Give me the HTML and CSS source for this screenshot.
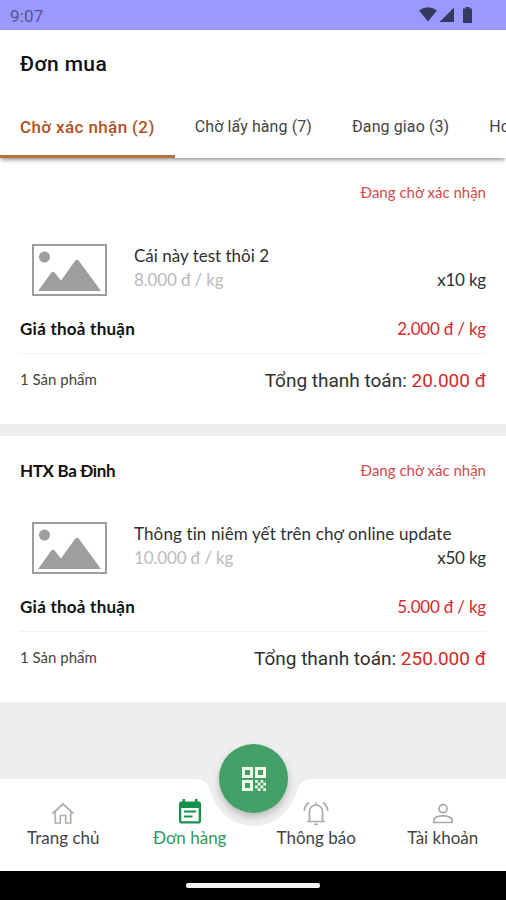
FILE: index.html
```html
<!DOCTYPE html>
<html lang="vi">
<head>
    <meta charset="UTF-8">
    <meta name="viewport" content="width=device-width, initial-scale=1.0">
    <title>Đơn mua</title>
    <link rel="stylesheet" href="styles.css">
</head>
<body>
    <div class="status-bar">
        <span class="clock">9:07</span>
        <svg class="status-icons" width="56" height="18" viewBox="0 0 56 18">
            <path d="M0 4.5Q9 -2 18 4.5L9 15.5Z"/>
            <path d="M20.5 16H35V1.5Z"/>
            <path d="M44 2.5h2.5V1h4v1.500H53V17h-9Z"/>
        </svg>
    </div>

    <header class="header">
        <h1>Đơn mua</h1>
        <nav class="tabs">
            <a class="tab active">Chờ xác nhận (2)</a>
            <a class="tab">Chờ lấy hàng (7)</a>
            <a class="tab">Đang giao (3)</a>
            <a class="tab">Hoàn thành</a>
        </nav>
    </header>

    <main class="orders">
        <section class="order">
            <div class="order-head">
                <span class="shop"></span>
                <span class="state">Đang chờ xác nhận</span>
            </div>
            <div class="product">
                <svg class="thumb" width="75" height="52" viewBox="0 0 75 52">
                    <rect x="1" y="1" width="73" height="50" fill="#fff" stroke="#9e9e9e" stroke-width="2"/>
                    <circle cx="12.500" cy="13" r="5.500"/>
                    <path d="M6 47L19 29Q21 26.500 23 29L29 36.500L43 17Q45 14.500 47 17L69 47Z"/>
                </svg>
                <div class="info">
                    <div class="name">Cái này test thôi 2</div>
                    <div class="line"><span class="old-price">8.000 đ / kg</span><span class="qty">x10 kg</span></div>
                </div>
            </div>
            <div class="deal">
                <span class="deal-label">Giá thoả thuận</span>
                <span class="deal-price">2.000 đ / kg</span>
            </div>
            <div class="total">
                <span class="count">1 Sản phẩm</span>
                <span class="sum">Tổng thanh toán: <span class="amount">20.000 đ</span></span>
            </div>
        </section>

        <section class="order">
            <div class="order-head">
                <span class="shop">HTX Ba Đình</span>
                <span class="state">Đang chờ xác nhận</span>
            </div>
            <div class="product">
                <svg class="thumb" width="75" height="52" viewBox="0 0 75 52">
                    <rect x="1" y="1" width="73" height="50" fill="#fff" stroke="#9e9e9e" stroke-width="2"/>
                    <circle cx="12.500" cy="13" r="5.500"/>
                    <path d="M6 47L19 29Q21 26.500 23 29L29 36.500L43 17Q45 14.500 47 17L69 47Z"/>
                </svg>
                <div class="info">
                    <div class="name long">Thông tin niêm yết trên chợ online update</div>
                    <div class="line"><span class="old-price">10.000 đ / kg</span><span class="qty">x50 kg</span></div>
                </div>
            </div>
            <div class="deal">
                <span class="deal-label">Giá thoả thuận</span>
                <span class="deal-price">5.000 đ / kg</span>
            </div>
            <div class="total">
                <span class="count">1 Sản phẩm</span>
                <span class="sum">Tổng thanh toán: <span class="amount">250.000 đ</span></span>
            </div>
        </section>
    </main>

    <footer class="bottom-nav">
        <!-- bar with the notch for the round button -->
        <svg class="nav-shape" width="506" height="92" viewBox="0 0 506 92">
            <path d="M0 0H196Q206 0 209 9C215 32 232 47 253.500 47S292 32 298 9Q301 0 311 0H506V92H0Z" fill="#fff"/>
        </svg>
        <a class="nav-item">
            <svg width="24" height="24" viewBox="0 0 24 24" fill="none" stroke="#b0b0aa" stroke-width="1.700">
                <path d="M1.500 12.500L12 3L22.500 12.500M4.300 10.500V22H9.300V14.500H14.700V22H19.700V10.500"/>
            </svg>
            <span>Trang chủ</span>
        </a>
        <a class="nav-item active">
            <svg width="24" height="26" viewBox="0 0 24 26">
                <path fill="#14924a" fill-rule="evenodd" d="M4.500 0h2.500v2.500h10V0h2.500v2.500h1.300a2.200 2.200 0 0 1 2.200 2.200v17.600a2.200 2.200 0 0 1-2.200 2.200H3.200A2.200 2.200 0 0 1 1 22.300V4.700A2.200 2.200 0 0 1 3.200 2.500h1.300zM3.300 9v13.200h17.400V9zM6 11.500h12v2H6zM6 16.500h8.500v2H6z"/>
            </svg>
            <span>Đơn hàng</span>
        </a>
        <a class="nav-item">
            <svg width="26" height="24" viewBox="0 0 26 24" fill="none" stroke="#a9ada6" stroke-width="1.700">
                <path d="M4 20.500H22M6.500 20.500V10.500C6.500 6.500 9.500 4 13 4S19.500 6.500 19.500 10.500V20.500M13 4V1.500M11 23.300H15M1.200 10Q1.800 4.500 6 1.500M24.800 10Q24.200 4.500 20 1.500"/>
            </svg>
            <span>Thông báo</span>
        </a>
        <a class="nav-item">
            <svg width="22" height="24" viewBox="0 0 22 24" fill="none" stroke="#a9ada6" stroke-width="1.700">
                <circle cx="11" cy="7.700" r="4"/>
                <path d="M1.800 21.500V19.500C1.800 16 7 14.800 11 14.800S20.200 16 20.200 19.500V21.500Z"/>
            </svg>
            <span>Tài khoản</span>
        </a>
        <button class="scan">
            <svg width="24" height="24" viewBox="0 0 24 24" fill="#f2fbea">
                <path fill-rule="evenodd" d="M0 0h11v11H0zM3 3v5h5V3zM13 0h11v11H13zM16 3v5h5V3zM0 13h11v11H0zM3 16v5h5v-5z"/>
                <path d="M13 13h2.750v2.750H13zM18.500 13h2.750v2.750H18.500zM15.750 15.750h2.750v2.750h-2.750zM21.250 15.750H24v2.750h-2.750zM13 18.500h2.750v2.750H13zM18.500 18.500h2.750v2.750H18.500zM15.750 21.250h2.750V24h-2.750zM21.250 21.250H24V24h-2.750z"/>
            </svg>
        </button>
    </footer>

    <div class="system-bar"><span class="home-handle"></span></div>
</body>
</html>
```
FILE: styles.css
```css
* {
    box-sizing: border-box;
}

body {
    margin: 0;
    height: 900px;
    display: flex;
    flex-direction: column;
    overflow: hidden;
    background-color: #eee;
    color: #303030;
    font-family: Lato, "Noto Sans", sans-serif;
    font-variant-ligatures: none;
}

.status-bar {
    height: 30px;
    padding: 2px 31px 0 10px;
    display: flex;
    align-items: center;
    justify-content: space-between;
    background-color: #9999ff;
}

.clock {
    font: 17px Roboto, sans-serif;
    letter-spacing: 0.2px;
    color: #55558c;
}

.status-icons {
    margin-top: -2px;
    fill: #353960;
}

.header {
    height: 128px;
    position: relative;
    background-color: #fff;
    font-family: Roboto, sans-serif;
    box-shadow: 0 3px 4px -1px rgba(0, 0, 0, 0.4);
}

h1 {
    height: 66px;
    margin: 0;
    padding-left: 20px;
    font-size: 21px;
    line-height: 68px;
    font-weight: 500;
    letter-spacing: 0.4px;
    color: #111;
}

.tabs {
    height: 62px;
    display: flex;
    overflow: hidden;
}

.tab {
    flex: none;
    padding: 0 20px;
    line-height: 62px;
    font-size: 16px;
    letter-spacing: 0.1px;
    color: #444;
    white-space: nowrap;
}

.tab.active {
    border-bottom: 3px solid #b8713c;
    font-size: 17px;
    font-weight: 500;
    letter-spacing: 0.38px;
    color: #b4501c;
}

.order {
    height: 266px;
    margin-bottom: 12px;
    padding: 0 20px;
    background-color: #fff;
}

.order-head {
    height: 70px;
    padding-bottom: 2px;
    display: flex;
    align-items: center;
    justify-content: space-between;
}

.shop {
    font-size: 17px;
    font-weight: 700;
    letter-spacing: -0.35px;
    color: #111;
}

.state {
    font-size: 15px;
    color: #d34a4a;
}

.product {
    height: 84px;
    display: flex;
    align-items: flex-start;
    padding: 16px 0 0 12px;
}

.thumb {
    flex: none;
    fill: #9e9e9e;
}

.info {
    flex: 1;
    padding-left: 27px;
    font-size: 17px;
    line-height: 24px;
}

.name.long {
    letter-spacing: 0.12px;
}

.line {
    display: flex;
    justify-content: space-between;
}

.old-price {
    letter-spacing: -0.15px;
    color: #bbb;
}

.qty {
    letter-spacing: -0.2px;
}

.deal {
    height: 42px;
    padding-bottom: 8px;
    display: flex;
    align-items: center;
    justify-content: space-between;
    border-bottom: 1px solid #f2f2f2;
    font-size: 17px;
}

.deal-label {
    font-weight: 700;
    letter-spacing: 0.25px;
    color: #111;
}

.deal-price {
    letter-spacing: -0.2px;
}

.deal-price,
.amount {
    color: #d42a2a;
}

.total {
    height: 52px;
    display: flex;
    align-items: center;
    justify-content: space-between;
}

.count {
    padding-bottom: 2px;
    font-size: 15px;
    color: #444;
}

.sum {
    font-family: Roboto, sans-serif;
    font-size: 19px;
}

.bottom-nav {
    height: 92px;
    margin-top: auto;
    position: relative;
    display: flex;
}

.nav-shape {
    position: absolute;
    top: 0;
    left: 0;
}

.nav-item {
    position: relative;
    flex: 1;
    display: flex;
    flex-direction: column;
    align-items: center;
    justify-content: flex-end;
    padding-bottom: 22px;
    font-size: 17px;
    line-height: 22px;
    color: #444;
}

.nav-item.active {
    color: #2d9b5d;
}

.nav-item svg {
    margin-bottom: 2px;
}

/* sits in the notch, over the bar */
.scan {
    position: absolute;
    top: -35px;
    left: 219px;
    width: 69px;
    height: 69px;
    padding: 0;
    display: flex;
    align-items: center;
    justify-content: center;
    border: none;
    border-radius: 50%;
    background-color: #43a168;
    box-shadow: 0 4px 7px rgba(0, 0, 0, 0.22);
}

.system-bar {
    height: 29px;
    display: flex;
    justify-content: center;
    padding-top: 12px;
    background-color: #000;
}

.home-handle {
    width: 134px;
    height: 5px;
    border-radius: 2px;
    background-color: #f2f2f2;
}
```
